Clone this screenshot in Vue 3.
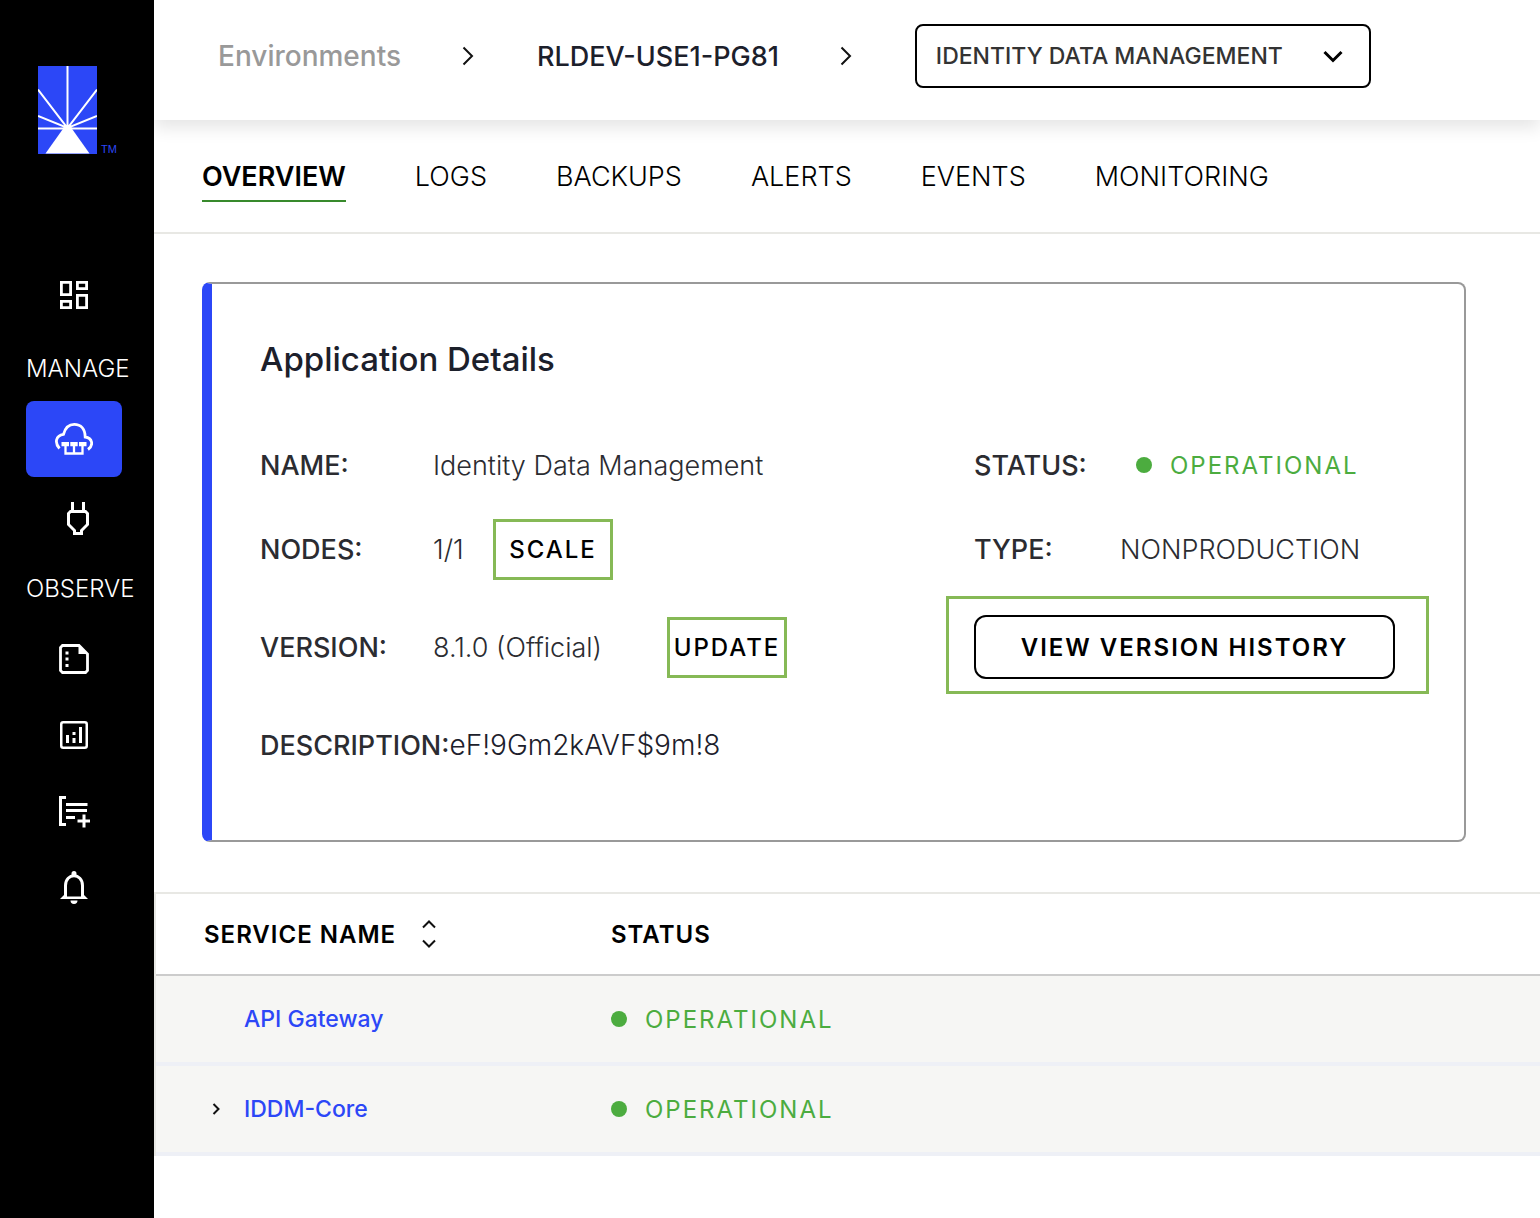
<script setup>
import { ref } from 'vue'

const tabs = ['OVERVIEW', 'LOGS', 'BACKUPS', 'ALERTS', 'EVENTS', 'MONITORING']
const activeTab = ref('OVERVIEW')
const application = ref('IDENTITY DATA MANAGEMENT')
const services = [
  { name: 'API Gateway', status: 'OPERATIONAL', expandable: false },
  { name: 'IDDM-Core', status: 'OPERATIONAL', expandable: true },
]
</script>

<template>
  <div class="app">
    <aside class="sidebar">
      <a class="logo" href="#" aria-label="Home">
        <svg width="59" height="88" viewBox="0 0 59 88">
          <rect width="59" height="88" fill="#2c47f7" />
          <g stroke="#fff" stroke-width="2" fill="none">
            <path d="M29.500 0V62M0 62.500H59M0 23.500L29.500 62L59 23.500M0 50L29.500 62L59 50" />
          </g>
          <path d="M27 60h5l19.500 27.500h-44z" fill="#fff" />
        </svg>
        <span class="tm">TM</span>
      </a>

      <nav class="nav" aria-label="Main">
        <a class="item" href="#" aria-label="Dashboard">
          <svg width="28" height="28" viewBox="0 0 28 28" fill="none" stroke="#fff" stroke-width="2.800">
            <path d="M1.400 1.400h9.200v12.200h-9.200zM17.400 1.400h9.200v6.200h-9.200zM1.400 20.400h9.200v6.200h-9.200zM17.400 14.400h9.200v12.200h-9.200z" />
          </svg>
        </a>
        <h2 class="group group-manage">MANAGE</h2>
        <a class="item active" href="#" aria-label="Environments">
          <svg width="38" height="32" viewBox="0 0 38 32" fill="none" stroke="#fff">
            <path stroke-width="2.800" d="M4.500 25.500C-.5 20 .5 12.500 8.500 11.300C10.500 4 14.500 1.400 19.200 1.400C26 1.400 30 6 30.200 14C37.500 14.800 38.800 22.500 33 26.500" />
            <path fill="#fff" stroke="none" d="M6.500 19h7.500v4.200H6.500zM15.300 19h7.400v4.200h-7.400zM24 19h7.500v4.200H24z" />
            <path stroke-width="2.300" d="M10.500 22v8.500h17V22M19 22v8" />
          </svg>
        </a>
        <a class="item plug" href="#" aria-label="Integrations">
          <svg width="22" height="34" viewBox="0 0 22 34" fill="none" stroke="#fff" stroke-width="3">
            <path d="M5.500 0v9M16.500 0v9M3.500 9.500h15l2 2v11l-6 6V31.500h-7v-3l-6-6v-11z" />
          </svg>
        </a>
        <h2 class="group">OBSERVE</h2>
        <a class="item" href="#" aria-label="Logs">
          <svg width="30" height="30" viewBox="0 0 30 30" fill="none" stroke="#fff" stroke-width="2.800">
            <path d="M3.500 1.500H20L28.500 10v16.500l-2 2H3.500l-2-2v-23z" />
            <path fill="#fff" stroke="none" d="M19.500 1.500L29 10H19.500zM6.500 7.500h3v3h-3zM6.500 13.500h3v3h-3zM6.500 20h3v3h-3z" />
          </svg>
        </a>
        <a class="item" href="#" aria-label="Reports">
          <svg width="28" height="28" viewBox="0 0 28 28" fill="none" stroke="#fff" stroke-width="2.500">
            <rect x="1.250" y="1.250" width="25.500" height="25.500" rx="2" />
            <path stroke-width="3" d="M7.500 14v8M14 17v5M14 11v3M20.500 6v16" />
          </svg>
        </a>
        <a class="item" href="#" aria-label="Create report">
          <svg width="32" height="34" viewBox="0 0 32 34" fill="none" stroke="#fff" stroke-width="3">
            <path d="M8 3.500H2.500v27H8M8 10.500h21.500M8 16.500h21M8 23.500h9M26 20.500v13M19.500 27h13" />
          </svg>
        </a>
        <a class="item" href="#" aria-label="Alerts">
          <svg width="28" height="34" viewBox="0 0 28 34" fill="none" stroke="#fff" stroke-width="3">
            <path d="M5.500 27V15.500C5.500 2.500 22.500 2.500 22.500 15.500V27" />
            <path fill="#fff" stroke="none" d="M11.500 6V3.500a2.500 2.500 0 0 1 5 0V6zM0 29l4-4v1.500h20V25l4 4zM10.500 30.500h7a3.500 3.500 0 0 1-7 0z" />
          </svg>
        </a>
      </nav>
    </aside>

    <main class="main">
      <header class="topbar">
        <a class="crumb muted" href="#">Environments</a>
        <svg class="sep" width="12" height="20" viewBox="0 0 12 20"><path d="M1.500 1.500L10 10L1.500 18.500" /></svg>
        <a class="crumb current" href="#">RLDEV-USE1-PG81</a>
        <svg class="sep" width="12" height="20" viewBox="0 0 12 20"><path d="M1.500 1.500L10 10L1.500 18.500" /></svg>
        <div class="select">
          <select v-model="application" aria-label="Application">
            <option>IDENTITY DATA MANAGEMENT</option>
          </select>
          <svg class="caret" width="20" height="14" viewBox="0 0 20 14"><path d="M1.500 2L10 10.500L18.500 2" /></svg>
        </div>
      </header>

      <nav class="tabs" aria-label="Sections">
        <a
          v-for="tab in tabs"
          :key="tab"
          href="#"
          class="tab"
          :class="{ selected: tab === activeTab }"
          @click.prevent="activeTab = tab"
        >{{ tab }}</a>
      </nav>

      <section class="card">
        <h1>Application Details</h1>
        <div class="columns">
          <dl class="details">
            <div class="row">
              <dt>NAME:</dt>
              <dd>Identity Data Management</dd>
            </div>
            <div class="row">
              <dt>NODES:</dt>
              <dd class="nodes">1/1</dd>
              <dd><button class="action" type="button">SCALE</button></dd>
            </div>
            <div class="row spaced">
              <dt>VERSION:</dt>
              <dd class="version">8.1.0 (Official)</dd>
              <dd><button class="action" type="button">UPDATE</button></dd>
            </div>
            <div class="row spaced">
              <dt>DESCRIPTION:</dt>
              <dd class="description">eF!9Gm2kAVF$9m!8</dd>
            </div>
          </dl>
          <div class="side">
            <dl class="details">
              <div class="row">
                <dt>STATUS:</dt>
                <dd class="status inset"><i class="dot"></i>OPERATIONAL</dd>
              </div>
              <div class="row">
                <dt>TYPE:</dt>
                <dd>NONPRODUCTION</dd>
              </div>
            </dl>
            <div class="row spaced">
              <div class="history">
                <button type="button">VIEW VERSION HISTORY</button>
              </div>
            </div>
          </div>
        </div>
      </section>

      <table class="services">
        <thead>
          <tr>
            <th class="name-col" scope="col">
              <button class="sort" type="button">
                SERVICE NAME
                <svg width="14" height="28" viewBox="0 0 14 28"><path d="M1 7.500L7 1.500L13 7.500M1 20.500L7 26.500L13 20.500" /></svg>
              </button>
            </th>
            <th scope="col">STATUS</th>
          </tr>
        </thead>
        <tbody>
          <tr v-for="service in services" :key="service.name">
            <td>
              <div class="service">
                <button v-if="service.expandable" class="expand" type="button" aria-label="Expand">
                  <svg width="8" height="12" viewBox="0 0 8 12"><path d="M1.500 1L6.500 6L1.500 11" /></svg>
                </button>
                <span v-else class="expand"></span>
                <a href="#">{{ service.name }}</a>
              </div>
            </td>
            <td><span class="status"><i class="dot"></i>{{ service.status }}</span></td>
          </tr>
        </tbody>
      </table>
    </main>
  </div>
</template>

<style>
body {
  margin: 0;
  background: #fff;
}
</style>

<style scoped>
.app {
  display: flex;
  min-height: 100vh;
  font-family: Inter, "Liberation Sans", sans-serif;
  font-size: 27px;
  color: #2b2c31;
}
.app *,
.app *::before {
  box-sizing: border-box;
}
a {
  color: inherit;
  text-decoration: none;
}
button {
  margin: 0;
  padding: 0;
  border: 0;
  background: none;
  color: #000;
  font: inherit;
  letter-spacing: inherit;
}
svg {
  display: block;
  flex: none;
}

.sidebar {
  flex: none;
  width: 154px;
  padding-top: 66px;
  background: #000;
  color: #fff;
}
.logo {
  display: flex;
  align-items: flex-end;
  gap: 4px;
  margin-left: 38px;
}
.tm {
  color: #2c47f7;
  font: 11px/10px "Liberation Sans", sans-serif;
}
.nav {
  padding: 103px 26px 0;
}
.item {
  display: flex;
  align-items: center;
  justify-content: center;
  width: 96px;
  height: 76px;
  border-radius: 8px;
}
.item.active {
  background: #2c47f7;
}
.item.plug {
  width: 104px;
  margin-top: 4px;
}
.group {
  margin: 0;
  font-size: 24px;
  line-height: 64px;
  font-weight: 300;
}
.group-manage {
  padding-top: 4px;
}

.main {
  flex: 1;
  min-width: 0;
}
.topbar {
  display: flex;
  align-items: center;
  height: 120px;
  padding: 0 64px 8px;
  box-shadow: 0 8px 16px rgba(0, 0, 0, 0.1);
  clip-path: inset(0 0 -40px 0);
}
.crumb {
  font-weight: 500;
}
.muted {
  color: #999;
  font-size: 28px;
}
.current {
  color: #1c202b;
}
.sep {
  margin: 0 63px 0 61px;
}
.sep path,
.caret path,
.sort path,
.expand path {
  fill: none;
  stroke: #111;
  stroke-width: 2;
}
.select {
  position: relative;
  flex: 0 1 456px;
}
select {
  appearance: none;
  width: 100%;
  height: 64px;
  padding: 0 64px 0 19px;
  border: 2px solid #000;
  border-radius: 8px;
  background: #fff;
  color: #333;
  font: 500 23px Inter, "Liberation Sans", sans-serif;
}
.caret {
  position: absolute;
  top: 26px;
  right: 28px;
  pointer-events: none;
}
.caret path {
  stroke: #000;
  stroke-width: 3;
}

.tabs {
  display: flex;
  gap: 69px;
  height: 114px;
  padding: 36px 48px 0;
  border-bottom: 2px solid #e8e8e4;
  color: #000;
}
.tab {
  height: 46px;
  line-height: 42px;
  font-weight: 300;
}
.tab.selected {
  border-bottom: 2px solid #388a2c;
  font-weight: 600;
}

.card {
  margin: 48px 74px 50px 48px;
  padding: 51px 0 63px 48px;
  border: 2px solid #999;
  border-left: 10px solid #2c47f7;
  border-radius: 8px;
}
h1 {
  margin: 0 0 50px;
  color: #1c202b;
  font-size: 33px;
  line-height: 48px;
  font-weight: 500;
}
.columns {
  display: flex;
}
.columns > .details {
  flex: 1;
}
.side {
  width: 490px;
}
.details {
  margin: 0;
}
.row {
  display: flex;
  align-items: center;
  height: 64px;
}
.row + .row {
  margin-top: 20px;
}
.row.spaced {
  margin-top: 34px;
}
dt {
  min-width: 173px;
  font-weight: 500;
}
dd {
  margin: 0;
  font-weight: 300;
}
.side dt {
  min-width: 146px;
}
.nodes {
  width: 60px;
}
.version {
  width: 234px;
}
.description {
  color: #1c202b;
  font-size: 28px;
}
.action {
  display: block;
  width: 120px;
  height: 61px;
  border: 3px solid #86b956;
  font-size: 24px;
  font-weight: 500;
  letter-spacing: 2px;
}
.history {
  position: relative;
}
.history::before {
  content: "";
  position: absolute;
  inset: -19px -34px -15px -28px;
  border: 3px solid #86b956;
  pointer-events: none;
}
.history button {
  display: block;
  width: 421px;
  height: 64px;
  border: 2px solid #000;
  border-radius: 12px;
  font-size: 24px;
  font-weight: 600;
  letter-spacing: 2px;
}
.status {
  display: flex;
  align-items: center;
  gap: 18px;
  color: #4cac3f;
  font-size: 24px;
  font-weight: 400;
  letter-spacing: 2px;
}
.inset {
  padding-left: 16px;
}
.dot {
  width: 16px;
  height: 16px;
  border-radius: 50%;
  background: #4cac3f;
}

.services {
  width: 100%;
  border-collapse: separate;
  border-spacing: 0;
  border-top: 2px solid #e8e8e4;
  border-left: 2px solid #e8e8e4;
  font-size: 24px;
}
th {
  height: 82px;
  padding: 0;
  border-bottom: 2px solid #ccc;
  color: #000;
  font-weight: 600;
  letter-spacing: 1px;
  text-align: left;
}
.name-col {
  width: 455px;
  padding-left: 48px;
}
.sort {
  display: flex;
  align-items: center;
  gap: 26px;
}
td {
  height: 90px;
  padding: 0;
  border-bottom: 4px solid #eef0f6;
  background: #f6f6f4;
}
.service {
  display: flex;
  align-items: center;
  padding-left: 48px;
  color: #2c47f7;
  font-size: 23px;
  font-weight: 500;
}
.expand {
  display: flex;
  justify-content: center;
  width: 24px;
  margin-right: 16px;
}
</style>
